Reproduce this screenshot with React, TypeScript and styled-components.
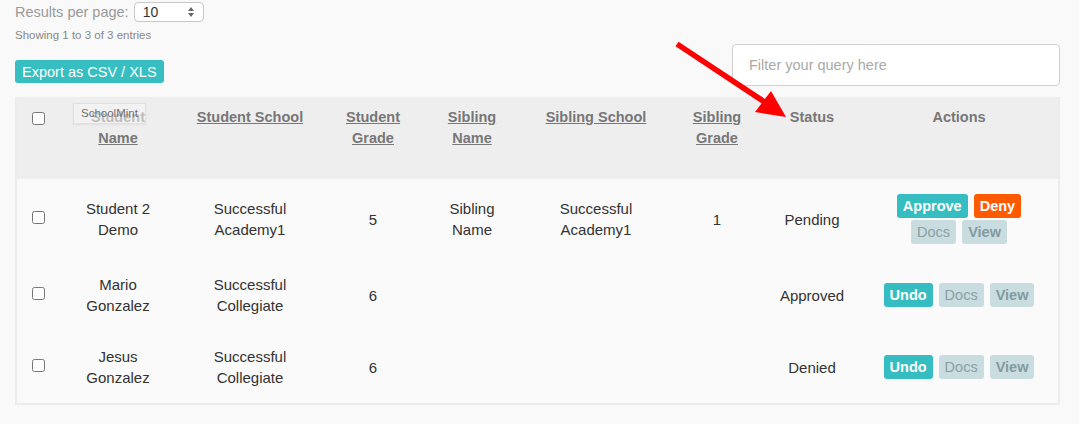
import React from "react";
import styled, { createGlobalStyle } from "styled-components";

const Global = createGlobalStyle`
  html, body { margin: 0; padding: 0; background: #f9f9f9; }
  body { font-family: "Liberation Sans", Arial, sans-serif; color: #333; }
`;

const Page = styled.div`
  position: relative;
  padding: 2px 19px 20px 15px;
`;

const Toolbar = styled.div`
  display: flex;
  justify-content: space-between;
  align-items: flex-start;
`;

const LeftTools = styled.div`
  display: flex;
  flex-direction: column;
  align-items: flex-start;
`;

const ResultsRow = styled.div`
  display: flex;
  align-items: center;
  gap: 5px;
  font-size: 14.5px;
  color: #9a9a9a;
  height: 20px;
`;

const SelectBox = styled.div`
  height: 18px;
  width: 52px;
  border: 1px solid #c8c8c8;
  border-radius: 4px;
  background: #fff;
  display: flex;
  align-items: center;
  justify-content: space-between;
  padding: 0 8px 0 8px;
  box-sizing: content-box;
  font-size: 14px;
  color: #333;
`;

const Showing = styled.div`
  margin-top: 6px;
  font-size: 11.5px;
  line-height: 14px;
  color: #888;
`;

const ExportButton = styled.button`
  margin-top: 18px;
  height: 23px;
  padding: 0 7px;
  border: none;
  border-radius: 3px;
  background: #36bec1;
  color: #fff;
  font-family: "Liberation Sans", Arial, sans-serif;
  font-size: 14.5px;
`;

const FilterInput = styled.input`
  margin-top: 42px;
  width: 328px;
  height: 42px;
  box-sizing: border-box;
  border: 1px solid #d0d0d0;
  border-radius: 4px;
  background: #fff;
  padding: 0 16px;
  font-family: "Liberation Sans", Arial, sans-serif;
  font-size: 14.5px;
  &::placeholder { color: #aaa; }
`;

const Table = styled.table`
  margin-top: 11px;
  width: 100%;
  border-collapse: collapse;
  table-layout: fixed;
  border: 2px solid #ececec;
  border-top: none;
  background: #fafafa;
`;

const HeadRow = styled.tr`
  background: #eeeeee;
  height: 82px;
`;

const HeadCell = styled.th`
  position: relative;
  vertical-align: top;
  padding: 10px 15px 0;
  font-size: 14.5px;
  line-height: 21px;
  font-weight: bold;
  color: #777;
  text-align: center;
`;

const SortLink = styled.a`
  color: #777;
  text-decoration: underline;
`;

const CheckCell = styled.td<{ $head?: boolean }>`
  padding: ${(p) => (p.$head ? "14px 0 0" : "0")};
  vertical-align: ${(p) => (p.$head ? "top" : "middle")};
  text-align: center;
  input { margin: 0; width: 13px; height: 13px; }
`;

const Cell = styled.td`
  padding: 15px;
  vertical-align: middle;
  text-align: center;
  font-size: 15px;
  line-height: 21px;
  color: #333;
`;

const Tooltip = styled.div`
  position: absolute;
  left: 13px;
  top: 6px;
  padding: 2px 7px;
  font-size: 11.5px;
  line-height: 15px;
  font-weight: normal;
  color: #707070;
  background: rgba(246, 246, 246, 0.55);
  border: 1px solid #e0e0e0;
  box-shadow: 0 1px 2px rgba(0,0,0,0.06);
  white-space: nowrap;
`;

const Actions = styled.div`
  display: flex;
  flex-wrap: wrap;
  justify-content: center;
  column-gap: 6px;
  row-gap: 2px;
`;

const ActionButton = styled.button<{ $kind: "approve" | "deny" | "docs" | "view" }>`
  height: 24px;
  padding: 0 6px;
  border: none;
  border-radius: 3px;
  font-family: "Liberation Sans", Arial, sans-serif;
  font-size: 14.5px;
  font-weight: ${(p) => (p.$kind === "docs" ? "normal" : "bold")};
  background: ${(p) =>
    p.$kind === "approve" ? "#35bdc1" : p.$kind === "deny" ? "#ff5a00" : "#c9dde1"};
  color: ${(p) =>
    p.$kind === "docs" ? "#8aa0a4" : p.$kind === "view" ? "#839a9e" : "#fff"};
`;

const Arrow = styled.svg`
  position: absolute;
  left: 0;
  top: 0;
  pointer-events: none;
`;

type Row = {
  name: string[];
  school: string[];
  grade: string;
  sibName: string[];
  sibSchool: string[];
  sibGrade: string;
  status: string;
  pending: boolean;
};

const rows: Row[] = [
  { name: ["Student 2", "Demo"], school: ["Successful", "Academy1"], grade: "5", sibName: ["Sibling", "Name"], sibSchool: ["Successful", "Academy1"], sibGrade: "1", status: "Pending", pending: true },
  { name: ["Mario", "Gonzalez"], school: ["Successful", "Collegiate"], grade: "6", sibName: [], sibSchool: [], sibGrade: "", status: "Approved", pending: false },
  { name: ["Jesus", "Gonzalez"], school: ["Successful", "Collegiate"], grade: "6", sibName: [], sibSchool: [], sibGrade: "", status: "Denied", pending: false },
];

const Lines = ({ l }: { l: string[] }) => (
  <>
    {l.map((t, i) => (
      <React.Fragment key={i}>
        {i > 0 && <br />}
        {t}
      </React.Fragment>
    ))}
  </>
);

const Stepper = () => (
  <svg width="8" height="12" viewBox="0 0 8 12">
    <path d="M4 1 L7 5 H1 Z" fill="#666" />
    <path d="M4 11 L7 7 H1 Z" fill="#666" />
  </svg>
);

export default function App() {
  return (
    <Page>
      <Global />
      <Toolbar>
        <LeftTools>
          <ResultsRow>
            Results per page:
            <SelectBox>
              <span>10</span>
              <Stepper />
            </SelectBox>
          </ResultsRow>
          <Showing>Showing 1 to 3 of 3 entries</Showing>
          <ExportButton>Export as CSV / XLS</ExportButton>
        </LeftTools>
        <FilterInput placeholder="Filter your query here" />
      </Toolbar>
      <Table>
        <colgroup>
          <col style={{ width: 44 }} />
          <col style={{ width: 116 }} />
          <col style={{ width: 148 }} />
          <col style={{ width: 98 }} />
          <col style={{ width: 100 }} />
          <col style={{ width: 148 }} />
          <col style={{ width: 94 }} />
          <col style={{ width: 96 }} />
          <col />
        </colgroup>
        <thead>
          <HeadRow>
            <CheckCell as="th" $head>
              <input type="checkbox" />
            </CheckCell>
            <HeadCell>
              <SortLink>Student Name</SortLink>
              <Tooltip>SchoolMint</Tooltip>
            </HeadCell>
            <HeadCell><SortLink>Student School</SortLink></HeadCell>
            <HeadCell><SortLink>Student Grade</SortLink></HeadCell>
            <HeadCell><SortLink>Sibling Name</SortLink></HeadCell>
            <HeadCell><SortLink>Sibling School</SortLink></HeadCell>
            <HeadCell><SortLink>Sibling Grade</SortLink></HeadCell>
            <HeadCell>Status</HeadCell>
            <HeadCell>Actions</HeadCell>
          </HeadRow>
        </thead>
        <tbody>
          {rows.map((r, i) => (
            <tr key={i}>
              <CheckCell><input type="checkbox" /></CheckCell>
              <Cell><Lines l={r.name} /></Cell>
              <Cell><Lines l={r.school} /></Cell>
              <Cell>{r.grade}</Cell>
              <Cell><Lines l={r.sibName} /></Cell>
              <Cell><Lines l={r.sibSchool} /></Cell>
              <Cell>{r.sibGrade}</Cell>
              <Cell>{r.status}</Cell>
              <Cell>
                <Actions>
                  {r.pending ? (
                    <>
                      <ActionButton $kind="approve">Approve</ActionButton>
                      <ActionButton $kind="deny">Deny</ActionButton>
                    </>
                  ) : (
                    <ActionButton $kind="approve">Undo</ActionButton>
                  )}
                  <ActionButton $kind="docs">Docs</ActionButton>
                  <ActionButton $kind="view">View</ActionButton>
                </Actions>
              </Cell>
            </tr>
          ))}
        </tbody>
      </Table>
      <Arrow width="1079" height="424" viewBox="0 0 1079 424">
        <line x1="677" y1="44" x2="766" y2="103" stroke="#f00" strokeWidth="5.5" />
        <polygon points="786,117 755,112 771,91" fill="#f00" />
      </Arrow>
    </Page>
  );
}
